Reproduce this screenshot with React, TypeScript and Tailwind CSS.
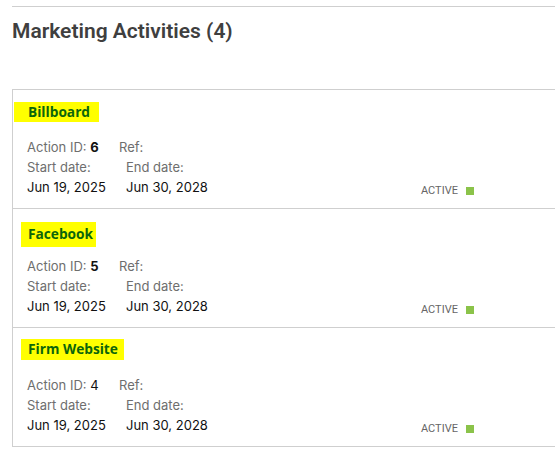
const activities = [
  { name: 'Billboard', id: '6', idBold: true, hl: 'ml-[1px] pl-[14px] pr-[9px] mt-[12px] h-[20px]' },
  { name: 'Facebook', id: '5', idBold: true, hl: 'ml-[8px] pl-[7px] pr-[3px] mt-[13px] h-[25px]' },
  { name: 'Firm Website', id: '4', idBold: false, hl: 'ml-[8px] pl-[7px] pr-[6px] mt-[11px] h-[21px]' },
];

function ActivityCard({ name, id, idBold, hl }: { name: string; id: string; idBold: boolean; hl: string }) {
  return (
    <div className="border-b border-[#cfcfcf] h-[119px]">
      <div className="h-[47px]">
        <span
          className={`inline-flex items-center bg-[#ffff00] text-[#0b650b] font-bold text-[13.7px] ${hl}`}
          style={{ fontFamily: '"Open Sans", "Noto Sans", sans-serif' }}
        >
          {name}
        </span>
      </div>
      <div className="pl-[14px] text-[13px] leading-[20px]" style={{ fontFamily: 'Inter, "Noto Sans", sans-serif' }}>
        <div className="flex">
          <span className="w-[92px] text-[#6e6e6e]">
            Action ID: <span className={idBold ? 'font-bold text-[#111]' : 'text-[#111]'}>{id}</span>
          </span>
          <span className="text-[#6e6e6e]">Ref:</span>
        </div>
        <div className="flex text-[#6e6e6e]">
          <span className="w-[99px]">Start date:</span>
          <span>End date:</span>
        </div>
        <div className="flex items-end text-[#111]">
          <span className="w-[99px]">Jun 19, 2025</span>
          <span className="w-[295px]">Jun 30, 2028</span>
          <span
            className="flex items-center gap-[8px] text-[11px] leading-[14px] text-[#666] mb-[-1px]"
            style={{ fontFamily: 'Roboto, Arial, sans-serif' }}
          >
            ACTIVE
            <span className="inline-block w-[8px] h-[8px] bg-[#8bc34a]" />
          </span>
        </div>
      </div>
    </div>
  );
}

export default function App() {
  return (
    <div className="w-[555px] h-[451px] overflow-hidden bg-white pl-[12px] pt-[6px]">
      <div className="border-t border-[#cfcfcf]">
        <h2
          className="mt-[11px] text-[21px] leading-[26px] font-semibold text-[#3f3f3f]"
          style={{ fontFamily: 'Roboto, Arial, sans-serif' }}
        >
          Marketing Activities (4)
        </h2>
        <div className="mt-[45px] border-l border-t border-[#cfcfcf]">
          {activities.map((a) => (
            <ActivityCard key={a.name} {...a} />
          ))}
        </div>
      </div>
    </div>
  );
}
